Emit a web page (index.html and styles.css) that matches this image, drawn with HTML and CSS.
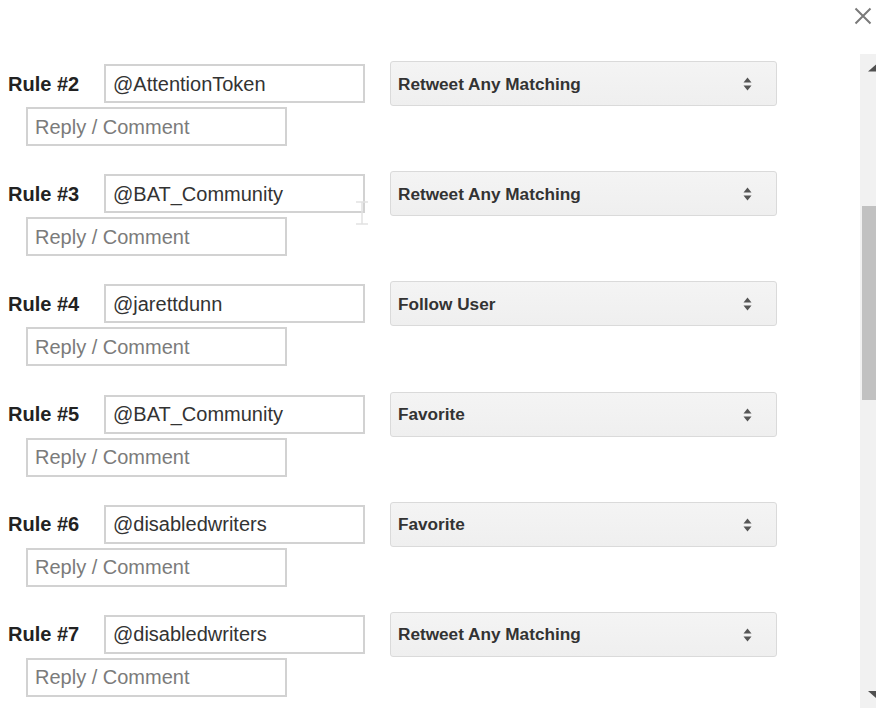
FILE: index.html
```html
<!DOCTYPE html>
<html>
<head>
<meta charset="utf-8">
<link rel="stylesheet" href="styles.css">
</head>
<body>
<div class="dialog">
  <div class="header">
    <svg class="close" width="18" height="18" viewBox="0 0 18 18"><path d="M1.5 1.5 L16.5 16.5 M16.5 1.5 L1.5 16.5" stroke="#7a7a7a" stroke-width="2" fill="none"/></svg>
  </div>
  <div class="body">
    <div class="content">
      <div class="rule">
        <div class="line">
          <span class="label">Rule #2</span>
          <input class="field" type="text" value="@AttentionToken">
          <div class="select"><span>Retweet Any Matching</span><svg class="updown" width="9" height="14" viewBox="0 0 9 14"><path d="M0.5 5.5 L4.5 0.5 L8.5 5.5 Z M0.5 8.5 L4.5 13.5 L8.5 8.5 Z" fill="#555"/></svg></div>
        </div>
        <input class="field reply" type="text" placeholder="Reply / Comment">
      </div>
      <div class="rule">
        <div class="line">
          <span class="label">Rule #3</span>
          <input class="field" type="text" value="@BAT_Community">
          <div class="select"><span>Retweet Any Matching</span><svg class="updown" width="9" height="14" viewBox="0 0 9 14"><path d="M0.5 5.5 L4.5 0.5 L8.5 5.5 Z M0.5 8.5 L4.5 13.5 L8.5 8.5 Z" fill="#555"/></svg></div>
        </div>
        <input class="field reply" type="text" placeholder="Reply / Comment">
        <svg class="ibeam" width="14" height="24" viewBox="0 0 14 24"><path d="M1 1 H13 M7 1 V23 M1 23 H13" stroke="#e2e2e2" stroke-width="1.5" fill="none"/></svg>
      </div>
      <div class="rule">
        <div class="line">
          <span class="label">Rule #4</span>
          <input class="field" type="text" value="@jarettdunn">
          <div class="select"><span>Follow User</span><svg class="updown" width="9" height="14" viewBox="0 0 9 14"><path d="M0.5 5.5 L4.5 0.5 L8.5 5.5 Z M0.5 8.5 L4.5 13.5 L8.5 8.5 Z" fill="#555"/></svg></div>
        </div>
        <input class="field reply" type="text" placeholder="Reply / Comment">
      </div>
      <div class="rule">
        <div class="line">
          <span class="label">Rule #5</span>
          <input class="field" type="text" value="@BAT_Community">
          <div class="select"><span>Favorite</span><svg class="updown" width="9" height="14" viewBox="0 0 9 14"><path d="M0.5 5.5 L4.5 0.5 L8.5 5.5 Z M0.5 8.5 L4.5 13.5 L8.5 8.5 Z" fill="#555"/></svg></div>
        </div>
        <input class="field reply" type="text" placeholder="Reply / Comment">
      </div>
      <div class="rule">
        <div class="line">
          <span class="label">Rule #6</span>
          <input class="field" type="text" value="@disabledwriters">
          <div class="select"><span>Favorite</span><svg class="updown" width="9" height="14" viewBox="0 0 9 14"><path d="M0.5 5.5 L4.5 0.5 L8.5 5.5 Z M0.5 8.5 L4.5 13.5 L8.5 8.5 Z" fill="#555"/></svg></div>
        </div>
        <input class="field reply" type="text" placeholder="Reply / Comment">
      </div>
      <div class="rule">
        <div class="line">
          <span class="label">Rule #7</span>
          <input class="field" type="text" value="@disabledwriters">
          <div class="select"><span>Retweet Any Matching</span><svg class="updown" width="9" height="14" viewBox="0 0 9 14"><path d="M0.5 5.5 L4.5 0.5 L8.5 5.5 Z M0.5 8.5 L4.5 13.5 L8.5 8.5 Z" fill="#555"/></svg></div>
        </div>
        <input class="field reply" type="text" placeholder="Reply / Comment">
      </div>
    </div>
    <div class="scrollbar">
      <div class="sb-btn">
        <svg width="16" height="17" viewBox="0 0 16 17"><path d="M8 17.5 L16 10.5 L16 17.5 Z" fill="#505050"/></svg>
      </div>
      <div class="sb-track"><div class="sb-thumb"></div></div>
      <div class="sb-btn">
        <svg width="16" height="17" viewBox="0 0 16 17"><path d="M8 0 L16 0 L16 7 Z" fill="#505050"/></svg>
      </div>
    </div>
  </div>
</div>
</body>
</html>
```

FILE: styles.css
```css
html, body {
  margin: 0;
  padding: 0;
  background: #ffffff;
}
body {
  font-family: "Liberation Sans", Arial, sans-serif;
  width: 876px;
  height: 715px;
  overflow: hidden;
}
.dialog {
  display: flex;
  flex-direction: column;
}
.header {
  height: 54px;
  display: flex;
  justify-content: flex-end;
  align-items: flex-start;
  padding-right: 4px;
}
.close {
  margin-top: 7px;
  display: block;
}
.body {
  display: flex;
  height: 654px;
}
.content {
  flex: 1;
  overflow: hidden;
  padding-top: 7px;
}
.rule {
  position: relative;
  height: 85px;
  margin-bottom: 25.2px;
}
.line {
  display: flex;
  align-items: center;
  height: 45px;
}
.label {
  width: 96px;
  padding-left: 8px;
  padding-top: 1px;
  font-size: 20px;
  font-weight: bold;
  color: #222;
}
.field {
  box-sizing: border-box;
  width: 261px;
  height: 39px;
  border: 2px solid #d2d2d2;
  background: #fff;
  font-family: "Liberation Sans", Arial, sans-serif;
  font-size: 20px;
  color: #333;
  padding: 1px 7px 0;
  margin: 0;
  outline: none;
  display: block;
}
.field::placeholder {
  color: #7b7b7b;
}
.reply {
  margin-left: 26px;
  margin-top: 1px;
}
.select {
  box-sizing: border-box;
  margin-left: 25px;
  width: 387px;
  height: 45px;
  background: linear-gradient(#f4f4f4, #efefef);
  border: 1px solid #dadada;
  border-radius: 3px;
  display: flex;
  align-items: center;
  justify-content: space-between;
  padding: 1px 24px 0 7px;
  font-size: 17.2px;
  font-weight: bold;
  color: #333;
}
.updown {
  display: block;
}
.ibeam {
  position: absolute;
  left: 355px;
  top: 30px;
}
.scrollbar {
  width: 16px;
  background: #f1f1f1;
  display: flex;
  flex-direction: column;
}
.sb-btn {
  height: 17px;
}
.sb-btn svg {
  display: block;
  overflow: visible;
}
.sb-track {
  flex: 1;
  padding-top: 135px;
}
.sb-thumb {
  margin-left: 2px;
  height: 194px;
  background: #c1c1c1;
}
```
